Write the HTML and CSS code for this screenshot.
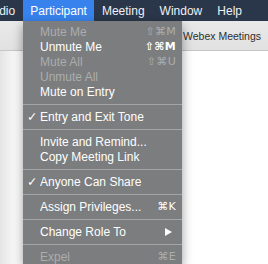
FILE: index.html
```html
<!DOCTYPE html>
<html lang="en">
<head>
    <meta charset="UTF-8">
    <meta name="viewport" content="width=device-width, initial-scale=1.0">
    <title>Participant menu</title>
    <link rel="stylesheet" href="styles.css">
</head>
<body>
    <div class="screen">
        <div class="menubar">
            <span class="mb-item">Audio</span>
            <span class="mb-item active">Participant</span>
            <span class="mb-item">Meeting</span>
            <span class="mb-item">Window</span>
            <span class="mb-item">Help</span>
            <span class="mb-icon"></span>
        </div>

        <div class="window">
            <div class="titlebar"><span>Webex Meetings</span></div>
            <div class="content"></div>
        </div>

        <div class="menu">
            <div class="item disabled"><span class="check"></span><span class="label">Mute Me</span><span class="key">⇧⌘M</span></div>
            <div class="item bold-key"><span class="check"></span><span class="label">Unmute Me</span><span class="key">⇧⌘M</span></div>
            <div class="item disabled"><span class="check"></span><span class="label">Mute All</span><span class="key">⇧⌘U</span></div>
            <div class="item disabled"><span class="check"></span><span class="label">Unmute All</span></div>
            <div class="item"><span class="check"></span><span class="label">Mute on Entry</span></div>
            <div class="sep"></div>
            <div class="item"><span class="check">✓</span><span class="label">Entry and Exit Tone</span></div>
            <div class="sep"></div>
            <div class="item"><span class="check"></span><span class="label">Invite and Remind...</span></div>
            <div class="item"><span class="check"></span><span class="label">Copy Meeting Link</span></div>
            <div class="sep"></div>
            <div class="item"><span class="check">✓</span><span class="label">Anyone Can Share</span></div>
            <div class="sep"></div>
            <div class="item"><span class="check"></span><span class="label">Assign Privileges...</span><span class="key">⌘K</span></div>
            <div class="sep"></div>
            <div class="item submenu"><span class="check"></span><span class="label">Change Role To</span>
                <svg class="arrow" width="7" height="8" viewBox="0 0 7 8"><polygon points="0,0 7,4 0,8" fill="#ffffff"/></svg>
            </div>
            <div class="sep"></div>
            <div class="item disabled"><span class="check"></span><span class="label">Expel</span><span class="key">⌘E</span></div>
        </div>
    </div>
</body>
</html>
```

FILE: styles.css
```css
body {
    margin: 0;
    font-family: 'Liberation Sans', Arial, sans-serif;
    background: #ffffff;
}
.screen {
    position: relative;
    width: 268px;
    height: 264px;
    overflow: hidden;
}
.menubar {
    display: flex;
    align-items: center;
    height: 21px;
    margin-left: -23px;
    background: #2a3649;
    color: #eef1f5;
    font-size: 12px;
    white-space: nowrap;
}
.mb-item {
    display: flex;
    align-items: center;
    height: 21px;
    padding: 0 7.5px;
}
.mb-item.active {
    background: #3782ec;
    color: #ffffff;
}
.mb-icon {
    width: 10px;
    height: 10px;
    margin-left: 22px;
    border-radius: 50%;
    background: #dfe3e8;
}
.window {
    display: flex;
    flex-direction: column;
}
.titlebar {
    display: flex;
    align-items: center;
    height: 29px;
    padding-left: 183px;
    background: linear-gradient(#e9e9e9, #e1e1e1);
    border-bottom: 1px solid #c6c6c6;
    font-size: 10.5px;
    color: #2e2e2e;
    white-space: nowrap;
}
.content {
    height: 213px;
    background: linear-gradient(90deg, #e4e4e4 0, #ffffff 20px);
}
.menu {
    position: absolute;
    top: 21px;
    left: 23px;
    width: 159px;
    padding-top: 3px;
    background: #7b7d7e;
    box-shadow: 0 4px 10px rgba(0, 0, 0, 0.4);
    font-size: 12px;
    color: #ffffff;
}
.item {
    display: flex;
    align-items: center;
    height: 15px;
    padding-right: 6px;
    white-space: nowrap;
}
.check {
    width: 17px;
    padding-left: 4px;
    box-sizing: border-box;
    font-family: 'DejaVu Sans', sans-serif;
    font-size: 12.5px;
}
.label {
    flex: 1;
}
.key {
    font-family: 'DejaVu Sans', sans-serif;
    font-size: 11px;
    letter-spacing: 0.3px;
}
.item.disabled {
    color: #abadae;
}
.bold-key .key {
    font-weight: bold;
}
.submenu {
    padding-right: 10px;
}
.sep {
    height: 1px;
    margin: 5px 0 4px;
    background: #a2a4a5;
}
```
